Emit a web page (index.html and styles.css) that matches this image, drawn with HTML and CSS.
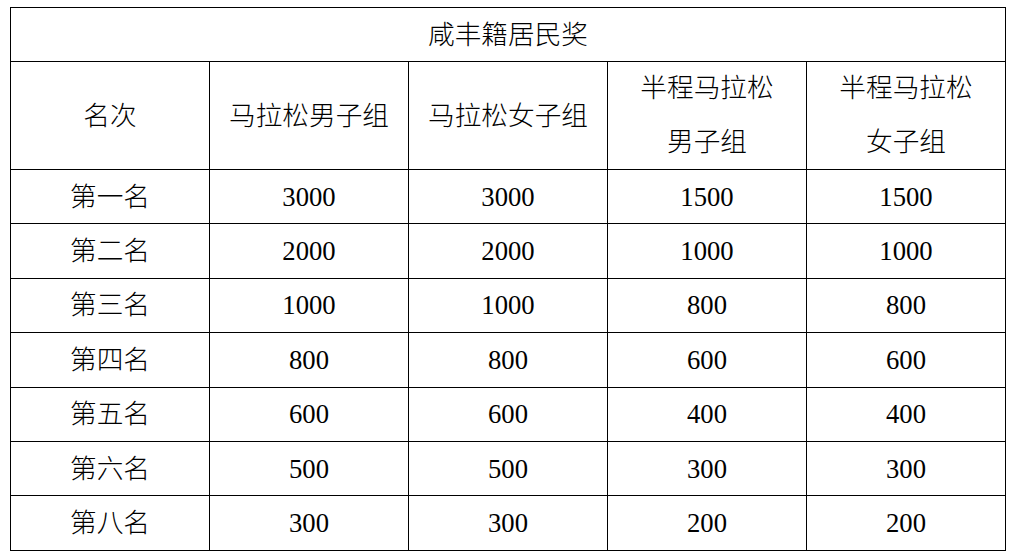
FILE: index.html
```html
<!DOCTYPE html>
<html lang="zh-CN">
<head>
<meta charset="utf-8">
<title>咸丰籍居民奖</title>
<link rel="stylesheet" href="styles.css">
</head>
<body>
<div class="page">
<table class="prize">
  <colgroup><col><col><col><col><col></colgroup>
  <tr class="title"><td colspan="5">咸丰籍居民奖</td></tr>
  <tr class="head">
    <td>名次</td>
    <td>马拉松男子组</td>
    <td>马拉松女子组</td>
    <td class="two">半程马拉松<br>男子组</td>
    <td class="two">半程马拉松<br>女子组</td>
  </tr>
  <tr><td>第一名</td><td>3000</td><td>3000</td><td>1500</td><td>1500</td></tr>
  <tr><td>第二名</td><td>2000</td><td>2000</td><td>1000</td><td>1000</td></tr>
  <tr><td>第三名</td><td>1000</td><td>1000</td><td>800</td><td>800</td></tr>
  <tr><td>第四名</td><td>800</td><td>800</td><td>600</td><td>600</td></tr>
  <tr><td>第五名</td><td>600</td><td>600</td><td>400</td><td>400</td></tr>
  <tr><td>第六名</td><td>500</td><td>500</td><td>300</td><td>300</td></tr>
  <tr><td>第八名</td><td>300</td><td>300</td><td>200</td><td>200</td></tr>
</table>
</div>
</body>
</html>
```
FILE: styles.css
```css
html, body {
  margin: 0;
  padding: 0;
  background: #fff;
}
.page {
  padding: 7px 0 0 10px;
}
.prize {
  border-collapse: collapse;
  table-layout: fixed;
  width: 996px;
  font-family: "Liberation Serif", "Noto Sans CJK SC", serif;
  font-size: 26.67px;
  font-weight: 300;
  color: #000;
}
.prize col {
  width: 20%;
}
.prize td {
  border: 1px solid #000;
  text-align: center;
  vertical-align: middle;
  padding: 0;
  height: 53.4px;
  line-height: 30px;
}
.prize tr.title td {
  height: 53px;
}
.prize tr.head td {
  height: 107px;
}
.prize td.two {
  line-height: 53.5px;
}
```
